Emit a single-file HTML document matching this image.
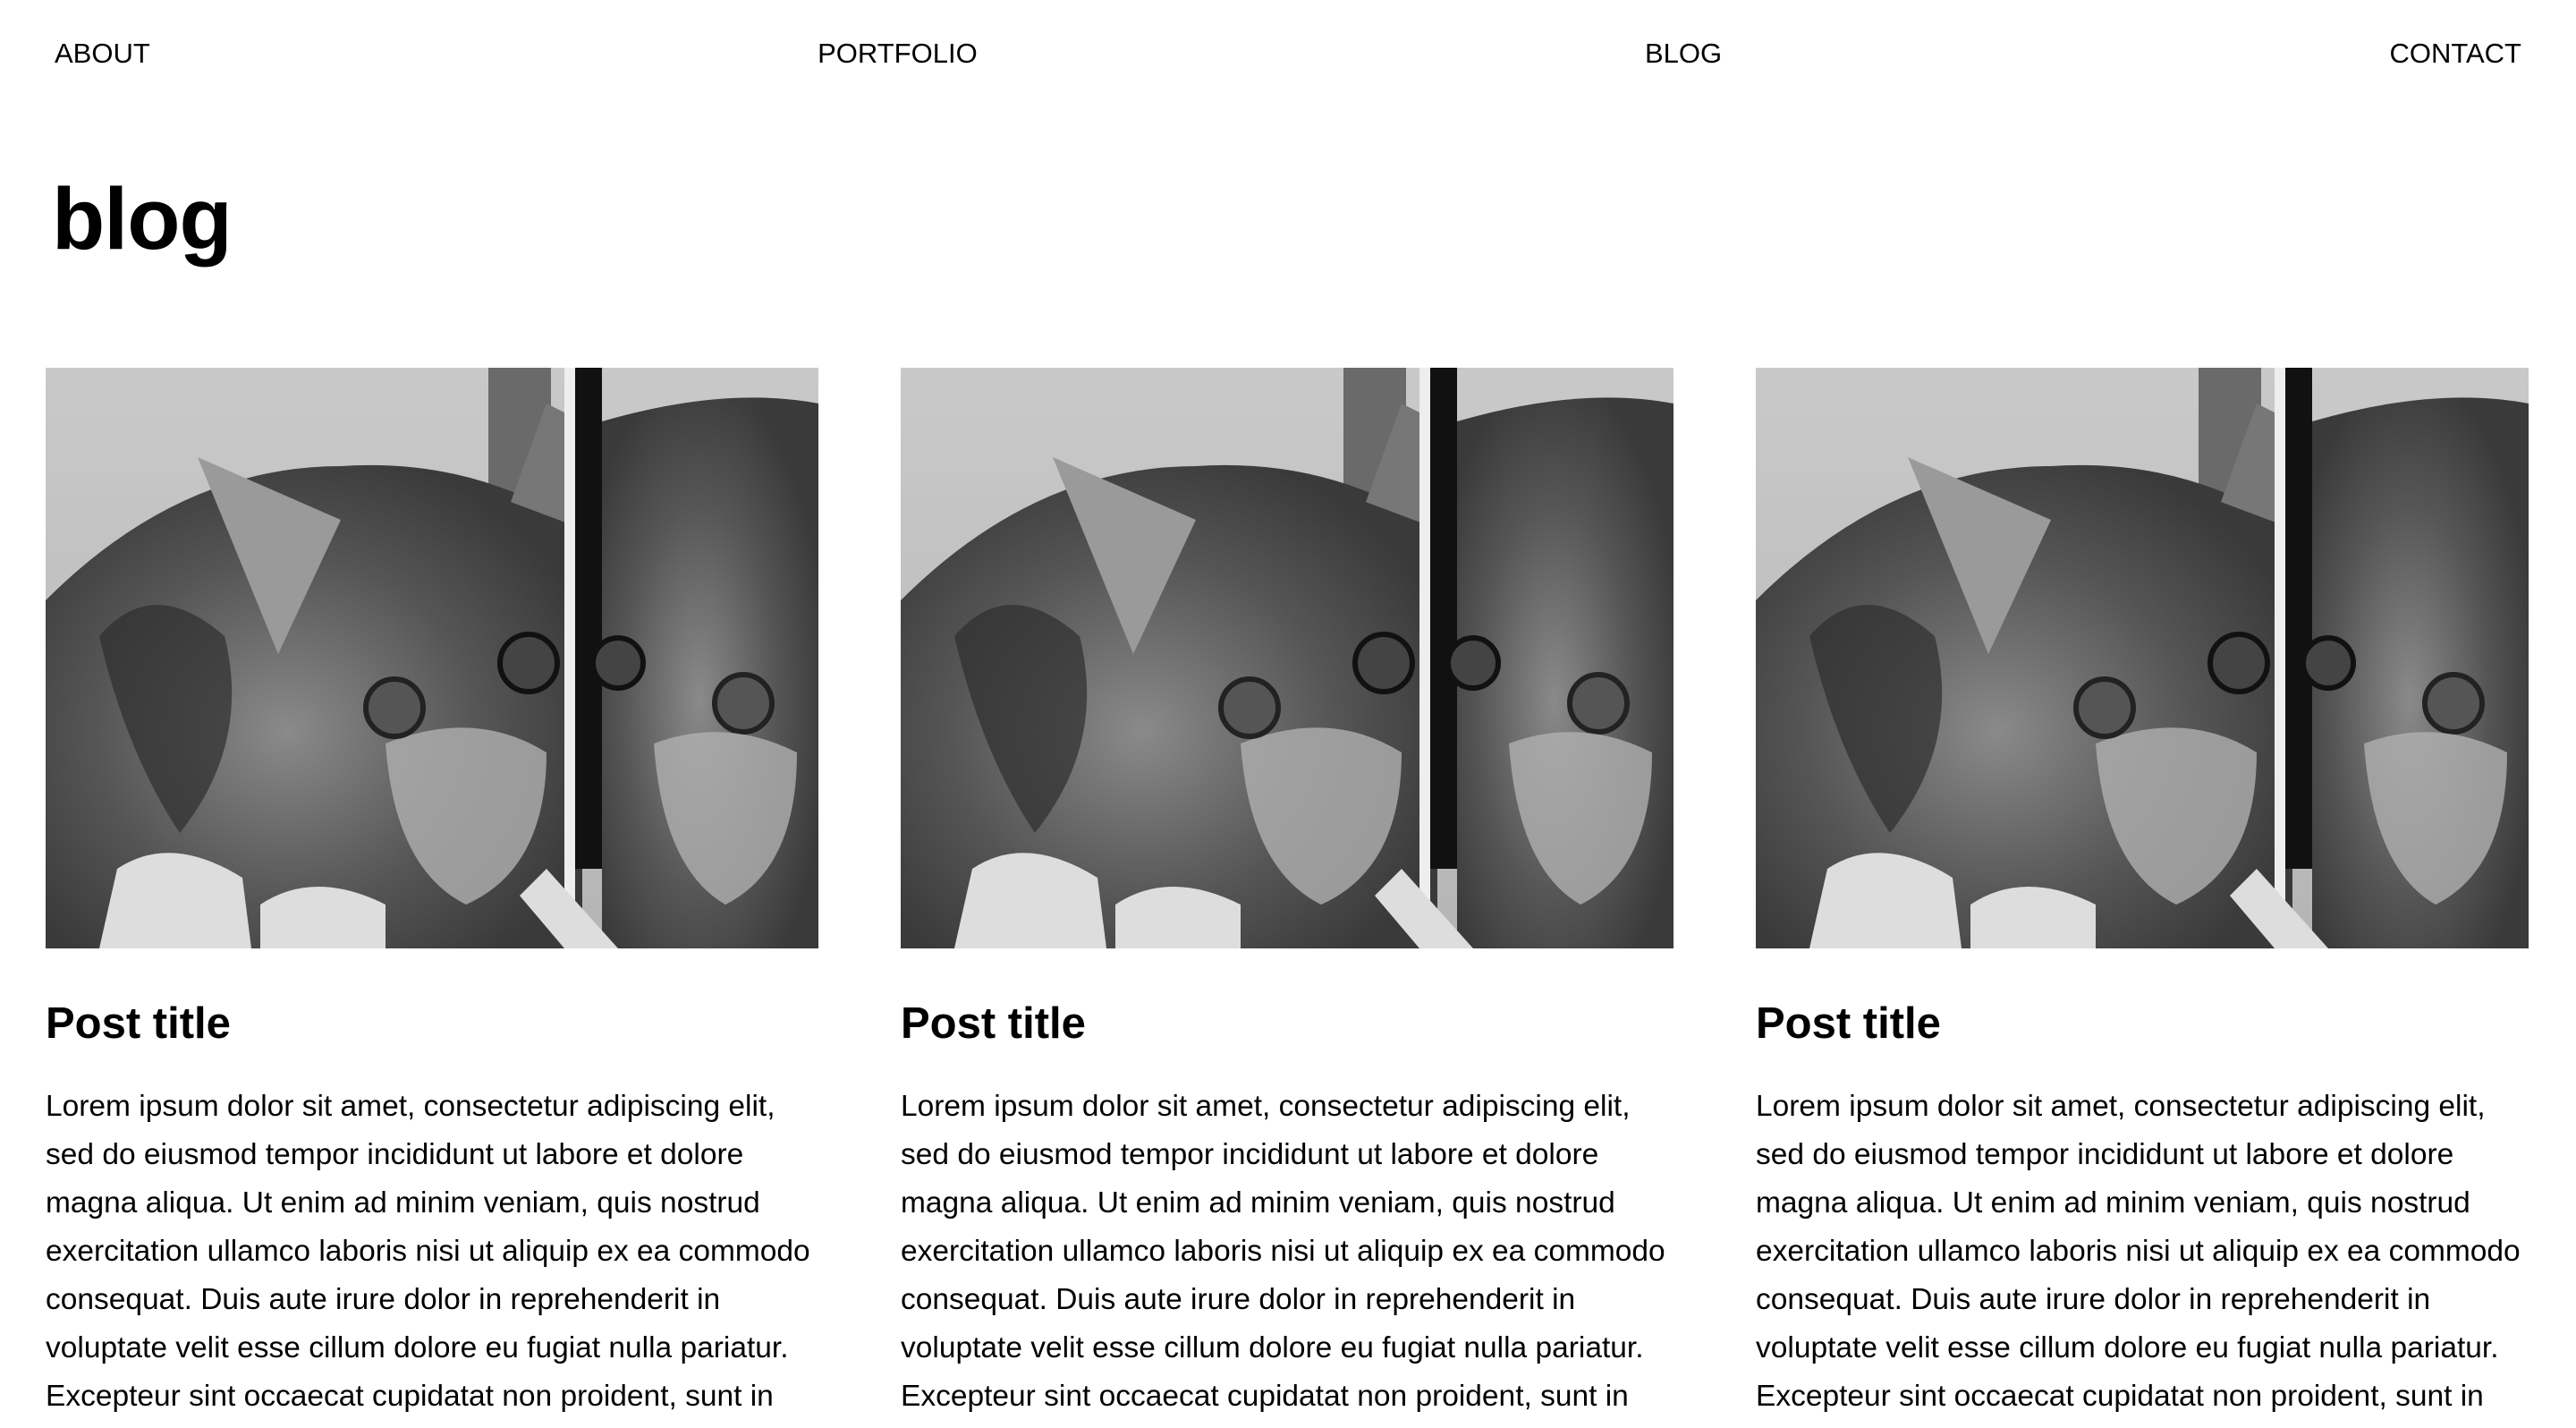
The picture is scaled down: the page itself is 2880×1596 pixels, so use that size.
<!DOCTYPE html>
<html><head><meta charset="utf-8"><style>
html,body{margin:0;padding:0;background:#fff;width:2880px;height:1596px;overflow:hidden;font-family:"Liberation Sans",sans-serif;color:#000}
nav{position:absolute;left:61px;right:61px;top:42px;display:flex;justify-content:space-between;font-size:31px;line-height:36px}
h1{position:absolute;left:58px;top:190px;margin:0;font-size:97px;font-weight:900;letter-spacing:-1px;line-height:110px}
.col{position:absolute;top:411px;width:864px}
.img{width:864px;height:649px;display:block}
h2{margin:0;position:absolute;top:1114px;font-size:49px;font-weight:bold;line-height:60px;white-space:nowrap}
p{margin:0;position:absolute;top:1210px;font-size:33.5px;line-height:54px;white-space:nowrap}
</style></head><body>
<nav><span>ABOUT</span><span>PORTFOLIO</span><span>BLOG</span><span>CONTACT</span></nav>
<h1>blog</h1>
<svg width="0" height="0" style="position:absolute"><defs>
<linearGradient id="bg" x1="0" y1="0" x2="0" y2="1"><stop offset="0" stop-color="#c9c9c9"/><stop offset="1" stop-color="#b5b5b5"/></linearGradient>
<radialGradient id="fur" cx="0.45" cy="0.55" r="0.6"><stop offset="0" stop-color="#8a8a8a"/><stop offset="0.6" stop-color="#555"/><stop offset="1" stop-color="#3a3a3a"/></radialGradient>
<g id="cat">
<rect width="864" height="649" fill="url(#bg)"/>
<rect x="495" y="0" width="70" height="300" fill="#6a6a6a"/>
<path d="M0 260 Q150 110 330 110 Q480 100 600 180 L600 649 L0 649Z" fill="url(#fur)"/>
<path d="M170 100 L330 170 L260 320Z" fill="#9a9a9a"/>
<path d="M560 40 L600 60 L600 180 L520 150Z" fill="#777"/>
<path d="M60 300 Q120 230 200 300 Q230 420 150 520 Q90 430 60 300Z" fill="#2e2e2e" opacity="0.7"/>
<path d="M380 420 Q480 380 560 430 Q560 560 470 600 Q390 560 380 420Z" fill="#b0b0b0" opacity="0.8"/>
<circle cx="390" cy="380" r="32" fill="#555" stroke="#222" stroke-width="6"/>
<circle cx="540" cy="330" r="32" fill="#444" stroke="#111" stroke-width="6"/>
<rect x="580" y="0" width="12" height="649" fill="#eee"/>
<rect x="592" y="0" width="30" height="560" fill="#111"/>
<path d="M622 60 Q760 20 864 40 L864 649 L622 649Z" fill="url(#fur)"/>
<circle cx="780" cy="375" r="32" fill="#555" stroke="#222" stroke-width="6"/>
<circle cx="640" cy="330" r="28" fill="#444" stroke="#111" stroke-width="6"/>
<path d="M680 420 Q760 390 840 430 Q840 560 760 600 Q690 560 680 420Z" fill="#b0b0b0" opacity="0.8"/>
<path d="M80 560 Q140 520 220 570 L230 649 L60 649Z" fill="#ddd"/>
<path d="M240 600 Q300 560 380 600 L380 649 L240 649Z" fill="#ddd"/>
<path d="M560 560 L640 649 L580 649 L530 590Z" fill="#ddd"/>
</g></defs></svg>
<div class="col" style="left:51px"><svg class="img" viewBox="0 0 864 649"><use href="#cat"/></svg></div>
<div class="col" style="left:1007px"><svg class="img" viewBox="0 0 864 649"><use href="#cat"/></svg></div>
<div class="col" style="left:1963px"><svg class="img" viewBox="0 0 864 649"><use href="#cat"/></svg></div>
<h2 style="left:51px">Post title</h2>
<h2 style="left:1007px">Post title</h2>
<h2 style="left:1963px">Post title</h2>
<p style="left:51px">Lorem ipsum dolor sit amet, consectetur adipiscing elit,<br>sed do eiusmod tempor incididunt ut labore et dolore<br>magna aliqua. Ut enim ad minim veniam, quis nostrud<br>exercitation ullamco laboris nisi ut aliquip ex ea commodo<br>consequat. Duis aute irure dolor in reprehenderit in<br>voluptate velit esse cillum dolore eu fugiat nulla pariatur.<br>Excepteur sint occaecat cupidatat non proident, sunt in</p>
<p style="left:1007px">Lorem ipsum dolor sit amet, consectetur adipiscing elit,<br>sed do eiusmod tempor incididunt ut labore et dolore<br>magna aliqua. Ut enim ad minim veniam, quis nostrud<br>exercitation ullamco laboris nisi ut aliquip ex ea commodo<br>consequat. Duis aute irure dolor in reprehenderit in<br>voluptate velit esse cillum dolore eu fugiat nulla pariatur.<br>Excepteur sint occaecat cupidatat non proident, sunt in</p>
<p style="left:1963px">Lorem ipsum dolor sit amet, consectetur adipiscing elit,<br>sed do eiusmod tempor incididunt ut labore et dolore<br>magna aliqua. Ut enim ad minim veniam, quis nostrud<br>exercitation ullamco laboris nisi ut aliquip ex ea commodo<br>consequat. Duis aute irure dolor in reprehenderit in<br>voluptate velit esse cillum dolore eu fugiat nulla pariatur.<br>Excepteur sint occaecat cupidatat non proident, sunt in</p>
</body></html>
